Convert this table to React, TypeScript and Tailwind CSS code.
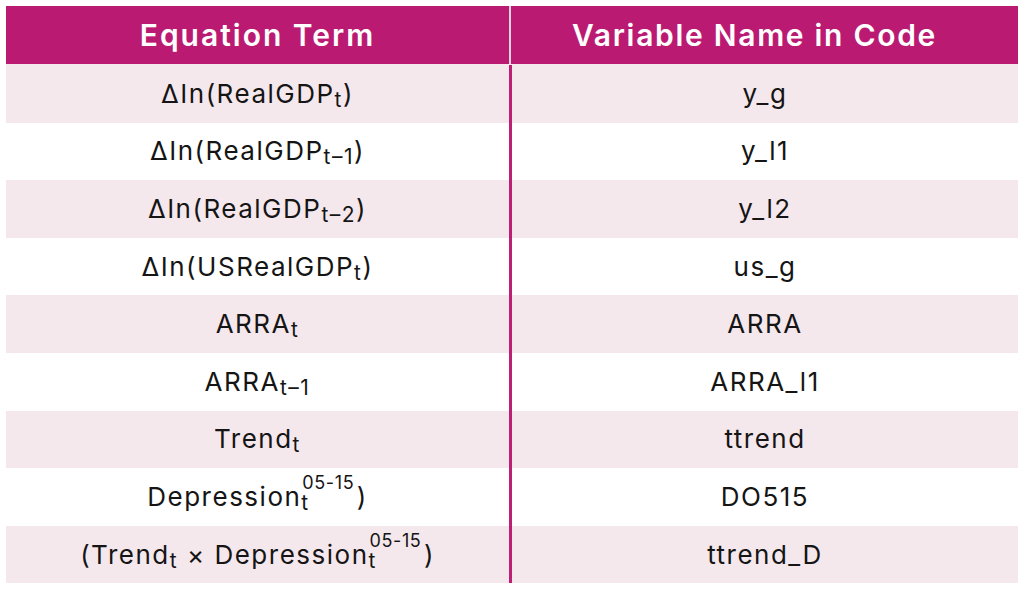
import React from "react";

type Row = { term: React.ReactNode; code: string };

const Sub = ({ children }: { children: React.ReactNode }) => (
  <span className="relative top-[4px] text-[21px] leading-none">{children}</span>
);

/** Subscript t with the 05-15 superscript stacked over it. */
const SubSup = () => (
  <>
    <span className="relative inline-block leading-none">
      <span className="relative top-[4px] text-[21px] leading-none">t</span>
      <span className="absolute bottom-[calc(100%-8px)] left-[1px] whitespace-nowrap text-[18px] leading-none tracking-[0.6px]">
        05-15
      </span>
    </span>
    <span className="inline-block w-[47px]" />
  </>
);

const rows: Row[] = [
  { term: <>ΔIn(RealGDP<Sub>t</Sub>)</>, code: "y_g" },
  { term: <>ΔIn(RealGDP<Sub>t–1</Sub>)</>, code: "y_l1" },
  { term: <>ΔIn(RealGDP<Sub>t–2</Sub>)</>, code: "y_l2" },
  { term: <>ΔIn(USRealGDP<Sub>t</Sub>)</>, code: "us_g" },
  { term: <>ARRA<Sub>t</Sub></>, code: "ARRA" },
  { term: <>ARRA<Sub>t–1</Sub></>, code: "ARRA_l1" },
  { term: <>Trend<Sub>t</Sub></>, code: "ttrend" },
  { term: <>Depression<SubSup />)</>, code: "DO515" },
  { term: <>(Trend<Sub>t</Sub> × Depression<SubSup />)</>, code: "ttrend_D" },
];

export default function App() {
  return (
    <div className="h-[590px] w-[1024px] bg-white pl-[6px] pt-[6px]" style={{ fontFamily: "Inter, 'Noto Sans', sans-serif" }}>
      <div className="w-[1012px]">
        <div className="grid h-[58px] grid-cols-[503px_2px_507px] bg-[#bb1a72] text-white">
          <div className="flex items-center justify-center text-[30px] font-semibold tracking-[2px]">Equation Term</div>
          <div className="bg-[#e9d3df]" />
          <div className="flex items-center justify-center pr-[20px] text-[30px] font-semibold tracking-[1.7px]">Variable Name in Code</div>
        </div>
        <div className="h-px bg-[#f3e6ec]" />
        {rows.map((r, i) => (
          <div
            key={i}
            className={`grid h-[57.6px] grid-cols-[503px_3px_506px] text-[26px] tracking-[1.5px] text-[#151515] ${i % 2 === 0 ? "bg-[#f5e8ed]" : "bg-white"}`}
          >
            <div className="flex items-center justify-center whitespace-nowrap leading-none">
              <span>{r.term}</span>
            </div>
            <div className="bg-[#bd1f75]" />
            <div className="flex items-center justify-center leading-none">{r.code}</div>
          </div>
        ))}
      </div>
    </div>
  );
}
